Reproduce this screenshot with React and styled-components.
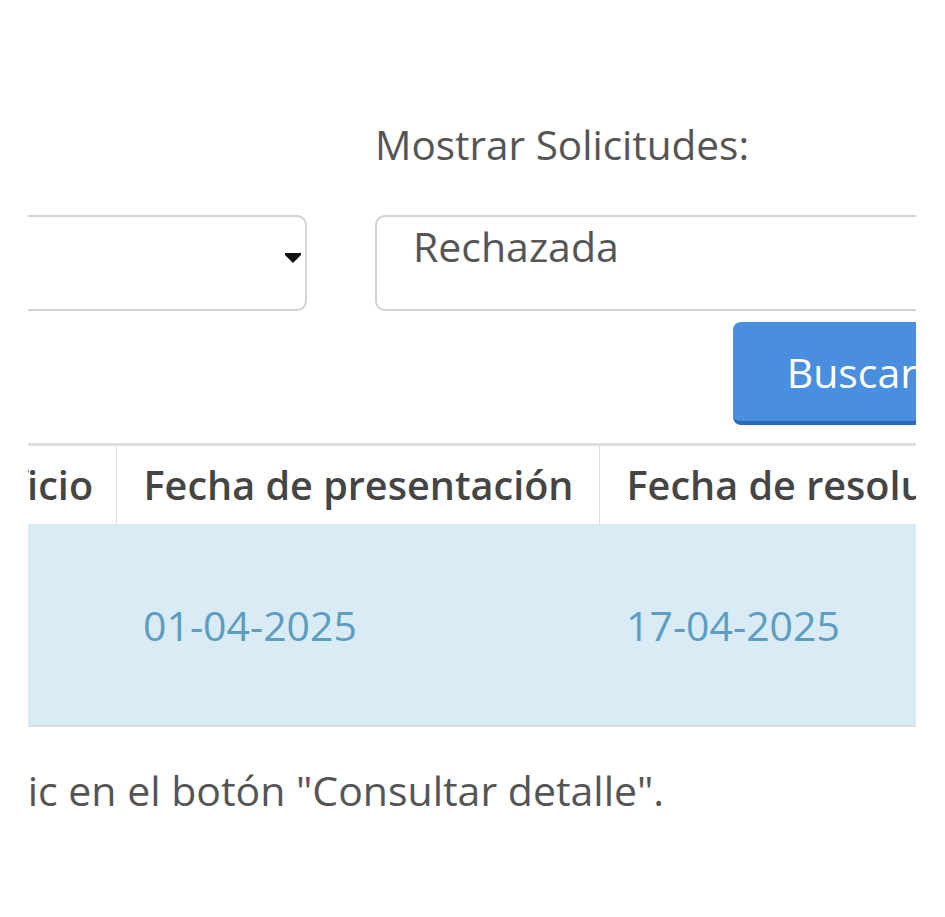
import React from "react";
import styled, { createGlobalStyle } from "styled-components";

const Global = createGlobalStyle`
  html, body { margin: 0; padding: 0; background: #fff; }
  body { font-family: "Open Sans", "Liberation Sans", sans-serif; color: #555; }
`;

const Viewport = styled.div`
  margin-left: 28px;
  width: 888px;
  height: 917px;
  overflow: hidden;
`;

const Page = styled.div`
  margin-left: -139px;
  width: 1100px;
  padding-top: 116px;
  font-size: 41px;
  line-height: 1.42;
`;

const FormRow = styled.div`
  display: grid;
  grid-template-columns: 418px 596px;
  column-gap: 68px;
`;

const Field = styled.div`
  display: flex;
  flex-direction: column;
`;

const Label = styled.label`
  display: block;
  height: 58px;
  margin-bottom: 41px;
  color: #555;
  font-size: 40.5px;
  visibility: ${(p) => (p.$hidden ? "hidden" : "visible")};
`;

const Box = styled.div`
  position: relative;
  box-sizing: border-box;
  height: 96px;
  border: 2px solid #d2d2d2;
  border-radius: 10px;
  background: #fff;
  padding: 0 36px;
  color: #555;
`;

const Caret = styled.svg`
  position: absolute;
  right: 4px;
  top: 36px;
`;

const Actions = styled.div`
  display: flex;
  justify-content: flex-end;
  margin-top: 11px;
`;

const Button = styled.button`
  box-sizing: border-box;
  height: 103px;
  padding: 0 54px;
  border: none;
  border-bottom: 4px solid #2c68bd;
  border-radius: 8px;
  background: #4a8ee0;
  color: #fff;
  font-family: inherit;
  font-size: 41px;
`;

const Table = styled.table`
  margin-top: 18px;
  width: 1100px;
  border-collapse: collapse;
  table-layout: fixed;
  border-top: 3px solid #dedede;
  border-bottom: 2px solid #dedede;
`;

const Th = styled.th`
  box-sizing: border-box;
  height: 80px;
  padding: 0 27px;
  text-align: left;
  font-weight: 600;
  font-size: 39.6px;
  color: #454545;
  white-space: nowrap;
  border-left: ${(p) => (p.$first ? "none" : "1px solid #dcdcdc")};
  border-bottom: 1px solid #e4e4e4;
`;

const Row = styled.tr`
  background: #d9ebf5;
`;

const Td = styled.td`
  height: 200px;
  padding: 0 27px;
  vertical-align: middle;
  color: #5d9dc2;
  font-size: 41px;
  white-space: nowrap;
`;

const Note = styled.p`
  margin: 34px 0 0;
  color: #555;
  white-space: nowrap;
`;

export default function App() {
  return (
    <>
      <Global />
      <Viewport>
        <Page>
          <FormRow>
            <Field>
              <Label $hidden>Año:</Label>
              <Box>
                <Caret width="16" height="10" viewBox="0 0 16 10">
                  <polygon points="0,0 16,0 16,2 8,10 0,2" fill="#111" />
                </Caret>
              </Box>
            </Field>
            <Field>
              <Label>Mostrar Solicitudes:</Label>
              <Box>Rechazada</Box>
              <Actions>
                <Button>Buscar</Button>
              </Actions>
            </Field>
          </FormRow>
          <Table>
            <colgroup>
              <col style={{ width: "227px" }} />
              <col style={{ width: "483px" }} />
              <col style={{ width: "390px" }} />
            </colgroup>
            <thead>
              <tr>
                <Th $first>Beneficio</Th>
                <Th>Fecha de presentación</Th>
                <Th>Fecha de resolución</Th>
              </tr>
            </thead>
            <tbody>
              <Row>
                <Td></Td>
                <Td>01-04-2025</Td>
                <Td>17-04-2025</Td>
              </Row>
            </tbody>
          </Table>
          <Note>Haga clic en el botón "Consultar detalle".</Note>
        </Page>
      </Viewport>
    </>
  );
}
